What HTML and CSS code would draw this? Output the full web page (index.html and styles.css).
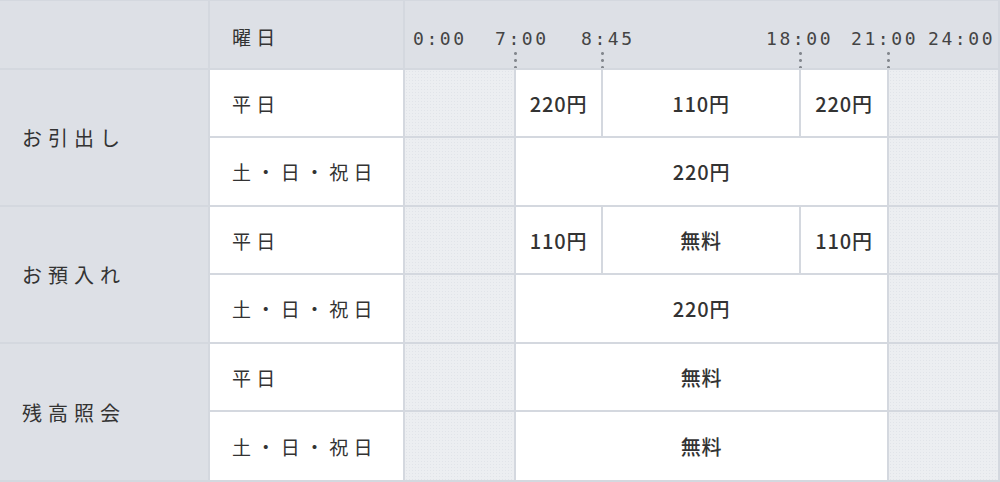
FILE: index.html
```html
<!DOCTYPE html>
<html lang="ja">
<head>
  <meta charset="UTF-8" />
  <meta name="viewport" content="width=device-width, initial-scale=1" />
  <title>ATM利用手数料</title>
  <link rel="stylesheet" href="styles.css">
</head>
<body>

  <div class="fee-table">
    <!-- 見出し行 -->
    <div class="cell head corner"></div>
    <div class="cell head day">曜日</div>
    <div class="cell head timeline">
      <span class="time t0">0:00</span>
      <span class="time t7">7:00</span>
      <span class="time t845">8:45</span>
      <span class="time t18">18:00</span>
      <span class="time t21">21:00</span>
      <span class="time t24">24:00</span>
      <i class="tick k7"></i>
      <i class="tick k845"></i>
      <i class="tick k18"></i>
      <i class="tick k21"></i>
    </div>

    <!-- お引出し -->
    <div class="cell kind span2">お引出し</div>
    <div class="cell day">平日</div>
    <div class="cell off"></div>
    <div class="cell fee">220円</div>
    <div class="cell fee">110円</div>
    <div class="cell fee">220円</div>
    <div class="cell off"></div>

    <div class="cell day">土・日・祝日</div>
    <div class="cell off"></div>
    <div class="cell fee wide">220円</div>
    <div class="cell off"></div>

    <!-- お預入れ -->
    <div class="cell kind span2">お預入れ</div>
    <div class="cell day">平日</div>
    <div class="cell off"></div>
    <div class="cell fee">110円</div>
    <div class="cell fee">無料</div>
    <div class="cell fee">110円</div>
    <div class="cell off"></div>

    <div class="cell day">土・日・祝日</div>
    <div class="cell off"></div>
    <div class="cell fee wide">220円</div>
    <div class="cell off"></div>

    <!-- 残高照会 -->
    <div class="cell kind span2">残高照会</div>
    <div class="cell day">平日</div>
    <div class="cell off"></div>
    <div class="cell fee wide">無料</div>
    <div class="cell off"></div>

    <div class="cell day">土・日・祝日</div>
    <div class="cell off"></div>
    <div class="cell fee wide">無料</div>
    <div class="cell off"></div>
  </div>

</body>
</html>
```

FILE: styles.css
```css
* {
  box-sizing: border-box;
}
body {
  margin: 0;
  font-family: 'Noto Sans CJK JP', 'Noto Sans', sans-serif;
  color: #333;
  background: #fff;
}

.fee-table {
  width: 1000px;
  height: 482px;
  display: grid;
  grid-template-columns: 208px 193px 109px 85px 196px 86px 109px;
  grid-template-rows: 67px 66px 67px 66px 67px 66px 68px;
  gap: 2px;
  padding: 1px 2px 2px 0;
  background: #d4d8df;
}

.cell {
  display: flex;
  align-items: center;
  background: #fff;
  font-size: 19px;
  letter-spacing: 0.28em;
}

.head {
  background: #dde0e6;
}
.head.day {
  padding-top: 4px;
}
.timeline {
  grid-column: 3 / 8;
  position: relative;
}

/* 時刻ラベル */
.time {
  position: absolute;
  top: 27px;
  font-family: 'DejaVu Sans Mono', monospace;
  font-size: 18px;
  line-height: 22px;
  letter-spacing: 2.6px;
  color: #444;
}
.t0 { left: 8px; }
.t7 { left: 90px; }
.t845 { left: 176px; }
.t18 { left: 361px; }
.t21 { left: 446px; }
.t24 { left: 523px; }

.tick {
  position: absolute;
  bottom: 0;
  width: 3px;
  height: 18px;
  background: radial-gradient(circle, #84888f 1.2px, transparent 1.7px) 0 0 / 3px 7px repeat-y;
}
.k7 { left: 108.5px; }
.k845 { left: 195.5px; }
.k18 { left: 393.5px; }
.k21 { left: 481.5px; }

/* 左列 */
.kind {
  background: #dde0e6;
  padding-left: 22px;
  font-size: 20px;
  letter-spacing: 0.3em;
}
.span2 {
  grid-row: span 2;
}
.day {
  padding-left: 22px;
}

/* 料金 */
.fee {
  justify-content: center;
  font-size: 20px;
  font-weight: 500;
  letter-spacing: 0.04em;
}
.fee.wide {
  grid-column: 4 / 7;
}
.off {
  background-color: #eceef1;
  background-image: radial-gradient(#e1e4e9 0.7px, transparent 0.9px);
  background-size: 3px 3px;
}
```
